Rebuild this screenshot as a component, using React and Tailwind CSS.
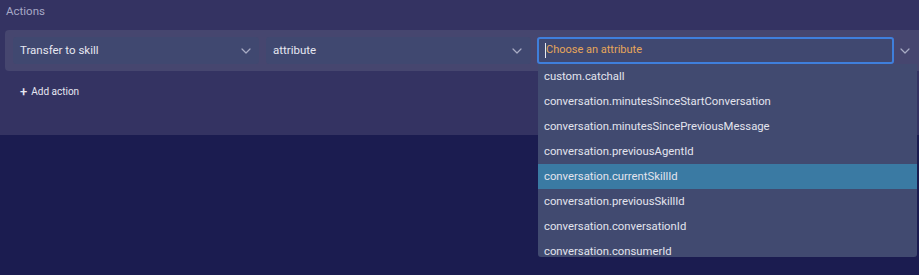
import React from "react";

const Chevron = ({ className = "" }) => (
  <svg width="10" height="6" viewBox="0 0 10 6" className={className} fill="none">
    <path d="M1 1l4 4 4-4" stroke="#a9acc4" strokeWidth="1.2" strokeLinecap="round" strokeLinejoin="round" />
  </svg>
);

const items = [
  "custom.catchall",
  "conversation.minutesSinceStartConversation",
  "conversation.minutesSincePreviousMessage",
  "conversation.previousAgentId",
  "conversation.currentSkillId",
  "conversation.previousSkillId",
  "conversation.conversationId",
  "conversation.consumerId",
];

export default function App() {
  return (
    <div className="w-[919px] h-[275px] bg-[#1b1c50] overflow-hidden relative" style={{ fontFamily: "Roboto, 'Liberation Sans', sans-serif" }}>
      <div className="h-[135px] bg-[#343362] pt-[3px]">
        <div className="pl-[6px] text-[11.5px] leading-[16px] text-[#a7a8c6]">Actions</div>
        <div className="mt-[11px] ml-[5px] h-[41px] bg-[#46466f] rounded-l-[4px] flex items-center pl-[8px] gap-[7px]">
          <div className="w-[246px] h-[27px] rounded-[3px] bg-[#404870] flex items-center justify-between pl-[7px] pr-[8px]">
            <span className="text-[11.5px] text-[#e6e7f1]">Transfer to skill</span>
            <Chevron />
          </div>
          <div className="w-[265px] h-[27px] rounded-[3px] bg-[#404870] flex items-center justify-between pl-[7px] pr-[9px]">
            <span className="text-[11.5px] text-[#e6e7f1]">attribute</span>
            <Chevron />
          </div>
          <div className="relative w-[381px] h-[41px] flex items-start">
            <div className="mt-[7px] ml-[-1px] w-[357px] h-[27px] rounded-[3px] border-2 border-[#3f7fdc] bg-[#404870] flex items-center pl-[6px]">
              <span className="w-px h-[15px] bg-[#e8e8f0]" />
              <span className="text-[11px] text-[#e6a65a]">Choose an attribute</span>
            </div>
            <div className="ml-[6px] mt-[18px]"><Chevron /></div>
          </div>
        </div>
        <div className="mt-[13px] ml-[20px] flex items-center gap-[4px] text-[10px] text-[#e6e7f1]">
          <span className="text-[13px] leading-none font-medium">+</span>
          <span>Add action</span>
        </div>
      </div>
      <div className="absolute left-[538px] top-[64px] w-[379px] h-[193px] bg-[#414a70] rounded-b-[3px] overflow-hidden">
        {items.map((it) => (
          <div
            key={it}
            className={`h-[25px] flex items-center pl-[6px] pt-[1px] text-[11.3px] text-[#e3e4ee] ${it === "conversation.currentSkillId" ? "bg-[#3a7aa3]" : ""}`}
          >
            {it}
          </div>
        ))}
      </div>
    </div>
  );
}
